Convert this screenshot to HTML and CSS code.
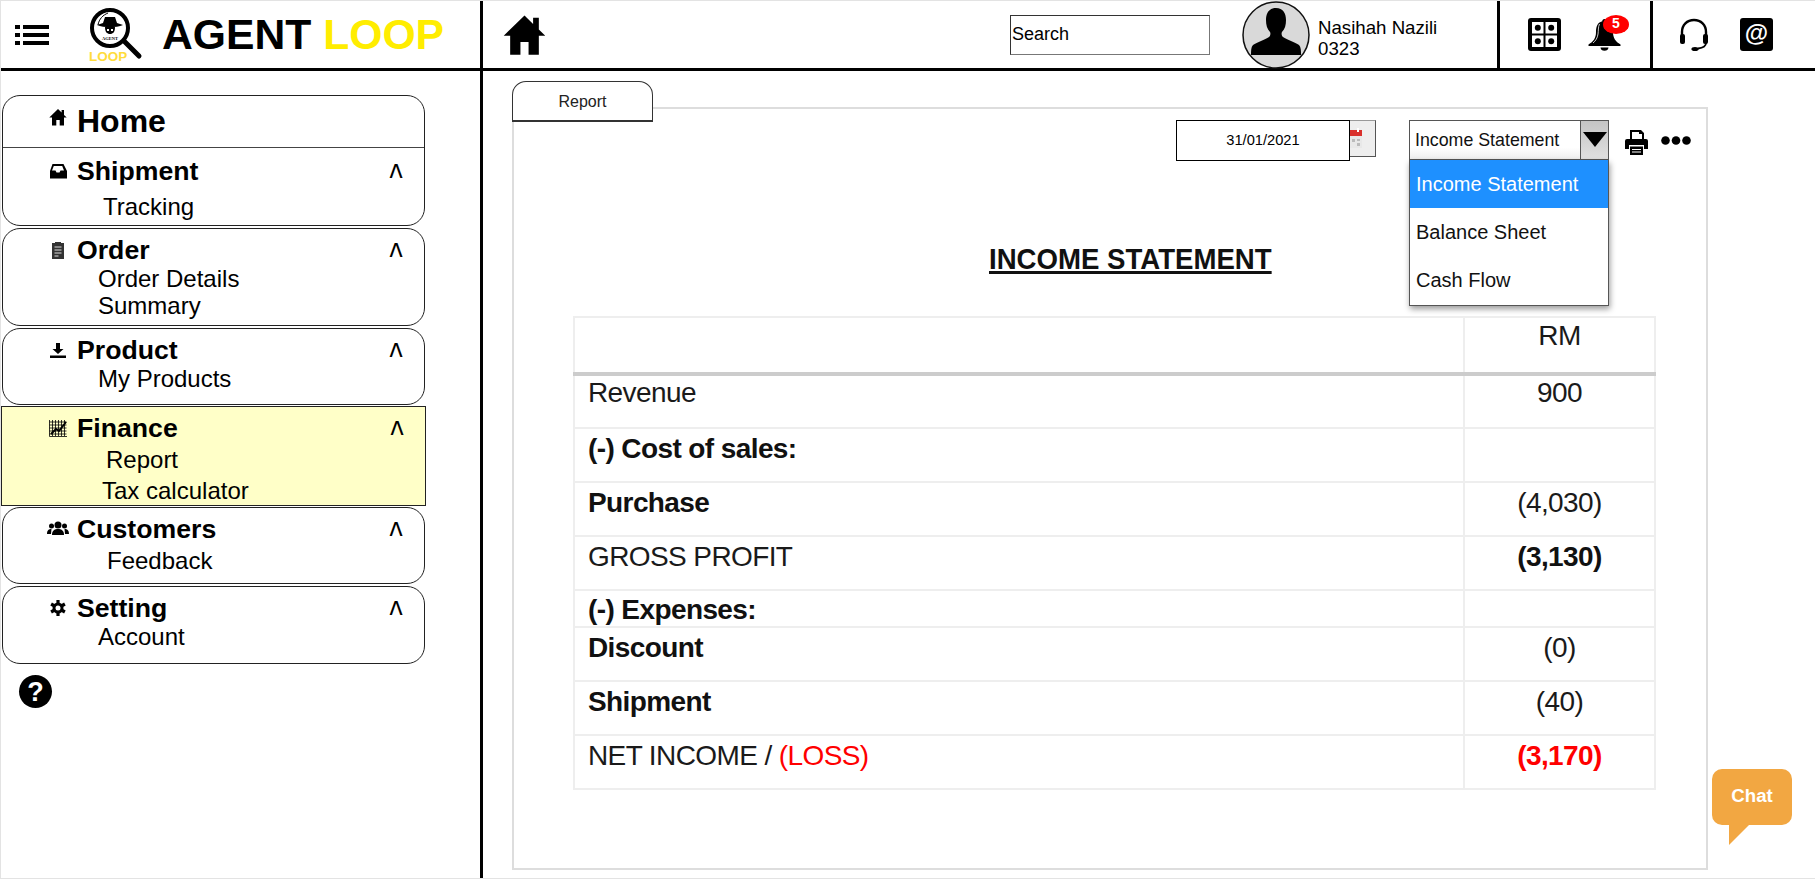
FILE: index.html
```html
<!DOCTYPE html>
<html lang="en">
<head>
<meta charset="utf-8">
<title>Agent Loop - Report</title>
<link rel="stylesheet" href="styles.css">
</head>
<body>
<div class="page">
  <header class="topbar">
    <div class="brand">
      <svg class="menu-icon" viewBox="0 0 34 20"><path d="M0 0h5v4H0zM8 0h26v4H8zM0 8h5v4H0zM8 8h26v4H8zM0 16h5v4H0zM8 16h26v4H8z"/></svg>
      <svg class="logo" viewBox="0 0 54 56">
        <circle cx="21" cy="21" r="18" fill="#fff" stroke="#000" stroke-width="4"/>
        <path d="M35 34l15 15" stroke="#000" stroke-width="5" stroke-linecap="round"/>
        <path d="M9 18c1-6 5-10 10-12" fill="none" stroke="#000" stroke-width="1"/>
        <path d="M16 10h10l2 6 6 2c-7 3-19 3-26 0l6-2z"/>
        <path d="M16 20h10c0 5-2 7-5 7s-5-2-5-7z" fill="#000"/>
        <path d="M18 22h2v2h-2zM22 22h2v2h-2z" fill="#fff"/>
        <text class="logo-agent" x="21" y="33" text-anchor="middle">AGENT</text>
        <text class="logo-loop" x="0" y="54">LOOP</text>
      </svg>
      <div class="title">AGENT <span class="title-accent">LOOP</span></div>
    </div>
    <div class="topnav">
      <svg class="top-home" viewBox="0 0 18 17"><path d="M9 .5L.3 9H3v8h4.3v-5.4h3.4V17H15V9h2.7L15 6.400V1.500h-2.400v2.600z"/></svg>
      <div class="top-spacer"></div>
      <div class="search">Search</div>
      <svg class="avatar" viewBox="0 0 68 68">
        <circle cx="34" cy="34" r="33" fill="#d9d9d9" stroke="#111" stroke-width="1.500"/>
        <path d="M34 7c-7 0-10 5-10 12 0 5 1 9 4 12 1 2 0 4-1 5-4 3-12 5-16 8-2 2-2 6-2 10h50c0-4 0-8-2-10-4-3-12-5-16-8-1-1-2-3-1-5 3-3 4-7 4-12 0-7-3-12-10-12z"/>
      </svg>
      <div class="user"><div>Nasihah Nazili</div><div>0323</div></div>
      <div class="tool-group tool-group-a">
        <svg class="tool-icon" viewBox="0 0 33 33">
          <rect width="33" height="33" rx="3"/>
          <path fill="#fff" d="M4 4h11.500v11.500H4zM17.500 4H29v11.500H17.500zM4 17.500h11.500V29H4zM17.500 17.500H29V29H17.500z"/>
          <circle cx="9.800" cy="9.800" r="3"/><circle cx="23.200" cy="9.800" r="3"/><circle cx="9.800" cy="23.200" r="3"/><circle cx="23.200" cy="23.200" r="3"/>
        </svg>
        <div class="bell-wrap">
          <svg class="tool-icon" viewBox="0 0 33 33">
            <path d="M16.500 1c-1.500 0-2.200 1-2.200 2.200C9 4.500 8 9.500 8 14c0 6-2.500 9.500-7.500 12.500V28h32v-1.500C27.500 23.500 25 20 25 14c0-4.500-1-9.500-6.300-10.800 0-1.200-.7-2.200-2.200-2.200zM12.500 29.500h8c0 2-1.800 3.300-4 3.300s-4-1.300-4-3.300z"/>
            <path d="M11.500 6c-1.500 3-1 7-1.500 10-.5 4-2.500 7-5 9" fill="none" stroke="#fff" stroke-width=".8"/>
          </svg>
          <span class="badge">5</span>
        </div>
      </div>
      <div class="tool-group tool-group-b">
        <svg class="headset" viewBox="0 0 30 33">
          <path d="M3 19V14C3 7 8 2 15 2s12 5 12 12v5" fill="none" stroke="#000" stroke-width="2.400"/>
          <rect x="1" y="16" width="5" height="10" rx="2"/><rect x="24" y="16" width="5" height="10" rx="2"/>
          <path d="M27 25c0 4-4 5-8 5.500" fill="none" stroke="#000" stroke-width="1.800"/>
          <ellipse cx="16" cy="31" rx="3.600" ry="2"/>
        </svg>
        <div class="at-icon">@</div>
      </div>
    </div>
  </header>

  <div class="body-row">
    <aside class="sidebar">
      <section class="card card-main">
        <div class="home-row">
          <svg class="nav-icon home-icon" viewBox="0 0 18 17"><path d="M9 .5L.3 9H3v8h4.300v-5.400h3.400V17H15V9h2.700L15 6.400V1.500h-2.400v2.600z"/></svg>
          <span class="home-label">Home</span>
        </div>
        <div class="nav-title nav-title-ship">
          <svg class="nav-icon" viewBox="0 0 18 18"><path fill-rule="evenodd" d="M3.500 2h11L18 9v7.500H1V9zM4.800 4L3 8.500h3.500l1 2h3l1-2H15L13.200 4z"/></svg>
          <span class="nav-label">Shipment</span><span class="caret">^</span>
        </div>
        <div class="sub sub-mid sub-gap-lg">Tracking</div>
      </section>
      <section class="card card-tall">
        <div class="nav-title">
          <svg class="nav-icon" viewBox="0 0 18 18"><path fill="#333" d="M3 2h3V1h6v1h3v16H3z"/><path fill="none" stroke="#ddd" d="M5.500 6h7M5.500 9h7M5.500 12h7M5.500 15h4"/></svg>
          <span class="nav-label">Order</span><span class="caret">^</span>
        </div>
        <div class="sub sub-near">Order Details</div>
        <div class="sub sub-near">Summary</div>
      </section>
      <section class="card card-short card-tight">
        <div class="nav-title">
          <svg class="nav-icon" viewBox="0 0 18 18"><path d="M7 2h4v6h3.500L9 13 3.500 8H7zM1 14.500h16V17H1z"/></svg>
          <span class="nav-label">Product</span><span class="caret">^</span>
        </div>
        <div class="sub sub-near">My Products</div>
      </section>
      <section class="card card-active card-tight">
        <div class="nav-title">
          <svg class="nav-icon" viewBox="0 0 18 18"><path fill="none" stroke="#000" stroke-width=".8" d="M.5 1v16.500H18M3.500 1v16M6.500 1v16M9.500 1v16M12.500 1v16M15.500 1v16M.5 3h17M.5 6h17M.5 9h17M.5 12h17M.5 15h17"/><path fill="none" stroke="#000" stroke-width="2" d="M2 15l5-5 3 2 7-9"/></svg>
          <span class="nav-label">Finance</span><span class="caret">^</span>
        </div>
        <div class="sub sub-far sub-gap-sm">Report</div>
        <div class="sub sub-mid sub-gap-xs">Tax calculator</div>
      </section>
      <section class="card card-short">
        <div class="nav-title">
          <svg class="nav-icon nav-icon-wide" viewBox="0 0 22 16"><circle cx="11" cy="4" r="3.500"/><path d="M5 14c0-5 3-6 6-6s6 1 6 6z"/><circle cx="4.500" cy="5" r="2.500"/><circle cx="17.500" cy="5" r="2.500"/><path d="M0 13c0-4 2-5 4.500-5L4 13zM22 13c0-4-2-5-4.500-5l.5 5z"/></svg>
          <span class="nav-label">Customers</span><span class="caret">^</span>
        </div>
        <div class="sub sub-far sub-gap-sm">Feedback</div>
      </section>
      <section class="card card-short-plus">
        <div class="nav-title">
          <svg class="nav-icon" viewBox="0 0 18 18"><circle cx="9" cy="9" r="5.500"/><path stroke="#000" stroke-width="3.200" d="M9 1v16M2.100 5l13.800 8M15.900 5L2.100 13"/><circle cx="9" cy="9" r="2.500" fill="#fff"/></svg>
          <span class="nav-label">Setting</span><span class="caret">^</span>
        </div>
        <div class="sub sub-near">Account</div>
      </section>
      <div class="help">?</div>
    </aside>

    <main class="content">
      <div class="tab">Report</div>
      <div class="panel">
        <div class="toolbar">
          <div class="date">31/01/2021</div>
          <div class="cal-btn">
            <svg class="cal-icon" viewBox="0 0 12 21"><path fill="#e8e8e8" d="M0 3h12v18H0z"/><path fill="#d9302c" d="M0 3h12v6H0z"/><path fill="#bbb" d="M2 12h3v3H2zM7 12h3v2H7zM7 16h3v3H7z"/><path fill="#fff" d="M7 1h2v4H7z"/></svg>
          </div>
          <div class="select">
            <div class="select-value">Income Statement</div>
            <div class="select-btn"><span class="select-arrow"></span></div>
            <ul class="dropdown">
              <li class="dropdown-item dropdown-item-on">Income Statement</li>
              <li class="dropdown-item">Balance Sheet</li>
              <li class="dropdown-item">Cash Flow</li>
            </ul>
          </div>
          <svg class="print-icon" viewBox="0 0 23 25"><path d="M5 0h11l3 3v6h-2V4h-3V2H7v7H5zM2 9h19a2 2 0 0 1 2 2v8h-4v-4H4v4H0v-8a2 2 0 0 1 2-2zM5 16.500h13V25H5z"/><path fill="#fff" d="M7 19h9v1H7zM7 21.500h9v1H7z"/></svg>
          <svg class="dots-icon" viewBox="0 0 30 9"><circle cx="4.500" cy="4.500" r="4.300"/><circle cx="15" cy="4.500" r="4.300"/><circle cx="25.500" cy="4.500" r="4.300"/></svg>
        </div>
        <h1 class="heading">INCOME STATEMENT</h1>
        <table class="sheet">
          <colgroup><col class="col-label"><col class="col-value"></colgroup>
          <tr class="row row-head"><td></td><td class="val">RM</td></tr>
          <tr class="row row-first"><td>Revenue</td><td class="val">900</td></tr>
          <tr class="row"><td class="strong">(-) Cost of sales:</td><td class="val"></td></tr>
          <tr class="row"><td class="strong">Purchase</td><td class="val">(4,030)</td></tr>
          <tr class="row"><td>GROSS PROFIT</td><td class="val strong">(3,130)</td></tr>
          <tr class="row row-short"><td class="strong">(-) Expenses:</td><td class="val"></td></tr>
          <tr class="row"><td class="strong">Discount</td><td class="val">(0)</td></tr>
          <tr class="row"><td class="strong">Shipment</td><td class="val">(40)</td></tr>
          <tr class="row"><td>NET INCOME / <span class="loss">(LOSS)</span></td><td class="val strong loss">(3,170)</td></tr>
        </table>
      </div>
      <div class="chat">Chat</div>
    </main>
  </div>
</div>
</body>
</html>
```

FILE: styles.css
```css
* { box-sizing: border-box; }
html, body { margin: 0; padding: 0; }
body { font-family: "Liberation Sans", Arial, sans-serif; color: #000; background: #fff; }
svg { display: block; flex: none; }

.page { width: 1815px; height: 879px; border: 1px solid #e3e3e3; border-right: 0; display: flex; flex-direction: column; overflow: hidden; }

.topbar { height: 70px; flex: none; display: flex; border-bottom: 3px solid #000; }
.brand { width: 482px; flex: none; display: flex; align-items: center; border-right: 3px solid #000; }
.menu-icon { width: 34px; height: 20px; margin-left: 14px; }
.logo { width: 54px; height: 56px; margin-left: 40px; }
.logo-agent { font: 700 4.500px "Liberation Serif", serif; }
.logo-loop { font: 700 13.500px "Liberation Sans", sans-serif; fill: #ffdc3c; }
.title { margin: 0 0 2px 19px; font-size: 42.670px; font-weight: 700; line-height: 50px; white-space: pre; }
.title-accent { color: #ffed00; }

.topnav { flex: 1; display: flex; align-items: center; }
.top-home { width: 43px; height: 41px; margin-left: 20px; }
.top-spacer { flex: 1; }
.search { width: 200px; height: 40px; padding-left: 1px; display: flex; align-items: center; font-size: 18px; border: 1px solid; border-color: #333 #777 #777 #333; }
.avatar { width: 68px; height: 68px; margin-left: 32px; }
.user { width: 179px; margin-left: 8px; padding-top: 6px; font-size: 18.670px; line-height: 21px; color: #000; }
.tool-group { align-self: stretch; display: flex; align-items: center; border-left: 3px solid #000; }
.tool-group-a { width: 153px; padding-left: 28px; gap: 27px; }
.tool-group-b { width: 165px; padding-left: 26px; gap: 31px; }
.tool-icon { width: 33px; height: 33px; }
.bell-wrap { position: relative; }
.badge { position: absolute; left: 15px; top: -3px; width: 26px; height: 19px; border-radius: 50%; background: #f00; color: #fff; font-size: 14px; font-weight: 700; line-height: 17px; text-align: center; }
.headset { width: 30px; height: 33px; }
.at-icon { width: 33px; height: 33px; border-radius: 3px; background: #000; color: #fff; font-size: 24px; font-weight: 700; line-height: 30px; text-align: center; }

.body-row { flex: 1; display: flex; min-height: 0; }

.sidebar { width: 482px; flex: none; padding: 24px 0 0 1px; border-right: 3px solid #000; }
.card { width: 423px; margin-bottom: 2px; border: 1.500px solid #222; border-radius: 18px; }
.card-tight { margin-bottom: 1px; }
.card-main { height: 131px; }
.card-tall { height: 98px; }
.card-short { height: 77px; }
.card-short-plus { height: 78px; }
.card-active { width: 425px; margin-left: -1px; border-radius: 0; border: 1px solid #222; background: #ffffc8; height: 100px; }
.card-active .nav-title { padding-left: 47px; }
.card-active .caret { margin-right: 20px; }
.home-row { height: 52px; padding: 7px 0 8px 46px; display: flex; align-items: center; border-bottom: 1.500px solid #444; }
.home-icon { margin-bottom: 8px; }
.home-label { margin-left: 10px; font-size: 32px; font-weight: 700; line-height: 36px; }
.nav-title { height: 30px; margin-top: 6px; padding-left: 46px; display: flex; align-items: center; }
.nav-title-ship { margin-top: 8px; }
.nav-icon { width: 18px; height: 18px; }
.nav-icon-wide { width: 22px; height: 16px; margin-left: -2px; margin-right: -2px; }
.nav-label { flex: 1; margin-left: 10px; font-size: 26.670px; font-weight: 700; line-height: 30px; }
.caret { width: 16px; margin-right: 20px; font-size: 28px; line-height: 30px; text-align: center; transform: scaleY(1.400) translateY(5px); }
.sub { font-size: 24px; line-height: 27px; white-space: nowrap; }
.sub-near { margin-left: 95px; }
.sub-mid { margin-left: 100px; }
.sub-far { margin-left: 104px; }
.sub-gap-lg { margin-top: 7px; }
.sub-gap-sm { margin-top: 3px; }
.sub-gap-xs { margin-top: 4px; }
.help { width: 33px; height: 33px; margin: 11px 0 0 17px; border-radius: 50%; background: #000; color: #fff; font-size: 27px; font-weight: 700; line-height: 34px; text-align: center; }

.content { flex: 1; min-width: 0; padding: 10px 0 0 29px; position: relative; }
.tab { position: relative; z-index: 1; width: 141px; height: 41px; border: 1.500px solid #333; border-bottom-width: 2px; border-radius: 14px 14px 0 0; background: #fff; font-size: 16px; line-height: 39px; text-align: center; color: #222; }
.panel { width: 1196px; height: 763px; margin-top: -15px; border: 2px solid #ddd; }

.toolbar { height: 41px; margin-top: 11px; padding-right: 15px; display: flex; justify-content: flex-end; align-items: flex-start; }
.date { width: 174px; height: 41px; border: 1.500px solid #000; font-size: 14.670px; line-height: 38px; text-align: center; position: relative; z-index: 1; background: #fff; }
.cal-btn { width: 27px; height: 37px; margin-left: -1px; border: 1px solid; border-color: #999 #555 #555 transparent; background: #eee; padding-top: 6px; }
.cal-icon { width: 12px; height: 21px; }
.select { position: relative; width: 200px; height: 40px; margin-left: 33px; display: flex; border: 1.500px solid #555; background: linear-gradient(#fff 70%, #eee); }
.select-value { flex: 1; padding-left: 5px; font-size: 17.800px; line-height: 39px; color: #111; white-space: nowrap; }
.select-btn { width: 28px; border-left: 1.500px solid #555; background: linear-gradient(#c4c4c4, #e0e0e0); display: flex; justify-content: center; padding-top: 11px; }
.select-arrow { width: 0; height: 0; border: 12px solid transparent; border-top: 15px solid #000; border-bottom: 0; }
.dropdown { position: absolute; z-index: 2; left: -1px; top: 39px; width: 200px; height: 146px; margin: 0; padding: 0; list-style: none; background: #fff; border: 1px solid #555; border-top: 0; box-shadow: 1px 3px 6px rgba(0, 0, 0, .4); }
.dropdown-item { height: 48px; padding-left: 6px; font-size: 20px; line-height: 48px; color: #111; }
.dropdown-item-on { background: #1e90ff; color: #fff; }
.print-icon { width: 23px; height: 25px; margin: 10px 0 0 16px; }
.dots-icon { width: 30px; height: 9px; margin: 16px 0 0 13px; }

.heading { width: max-content; margin: 80px 0 0 475px; font-size: 30px; font-weight: 700; line-height: 36px; text-decoration: underline; color: #111; transform: scaleX(.92); transform-origin: left; }

.sheet { width: 1083px; margin: 39px 0 0 59px; table-layout: fixed; border-collapse: collapse; font-size: 28px; letter-spacing: -.6px; color: #1a1a1a; }
.col-value { width: 191px; }
.row td { height: 54px; padding: 4px 0 0 13px; vertical-align: top; line-height: 32px; border: 2px solid #eee; overflow: hidden; }
.row-head td { height: 57px; padding-top: 2px; border-bottom: 4px solid #ccc; }
.row-first td { padding-top: 1px; }
.row-short td { height: 37px; padding-top: 3px; }
.row td.val { padding-left: 0; text-align: center; }
.strong { font-weight: 700; color: #111; }
.loss { color: #f00; }

.chat { position: absolute; left: 1229px; top: 698px; width: 80px; height: 56px; border-radius: 10px; background: #f2a742; color: #fff; font-size: 18.670px; font-weight: 700; line-height: 54px; text-align: center; }
.chat::after { content: ""; position: absolute; left: 17px; top: 56px; width: 0; height: 0; border-top: 20px solid #f2a742; border-right: 20px solid transparent; }
```
